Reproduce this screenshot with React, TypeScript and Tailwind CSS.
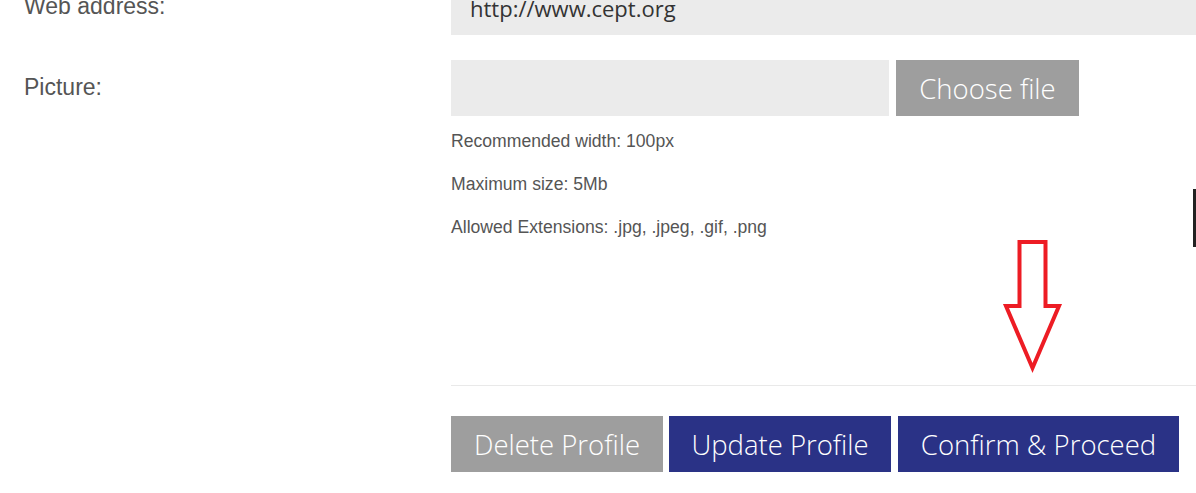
export default function App() {
  return (
    <div className="relative w-[1196px] h-[493px] overflow-hidden bg-white font-['Liberation_Sans',Arial,sans-serif] text-[#555]">
      {/* Web address row */}
      <div className="flex -mt-[21px] h-[56px]">
        <div className="w-[451px] pl-[24px] pt-[1px] text-[23px] leading-[52px]">Web address:</div>
        <div className="flex-1 bg-[#ebebeb] pl-[19px] pt-[1px] font-['Open_Sans',sans-serif] text-[22px] leading-[56px] text-[#333]">
          http://www.cept.org
        </div>
      </div>

      {/* Picture row */}
      <div className="flex mt-[25px]">
        <div className="w-[451px] pl-[24px] pt-[1px] text-[23px] leading-[52px]">Picture:</div>
        <div className="flex-1">
          <div className="flex gap-[7px]">
            <div className="w-[438px] h-[56px] bg-[#ebebeb]" />
            <button className="w-[183px] h-[56px] pt-[1px] bg-[#9e9e9e] text-white font-['Open_Sans',sans-serif] font-light text-[27.5px]">
              Choose file
            </button>
          </div>
          <div className="mt-[13px] flex flex-col gap-[18px] text-[17.6px] leading-[25px]">
            <p>Recommended width: 100px</p>
            <p>Maximum size: 5Mb</p>
            <p>Allowed Extensions: .jpg, .jpeg, .gif, .png</p>
          </div>
          <div className="mt-[145px] border-t border-[#e9e9e9]" />
          <div className="mt-[30px] flex font-['Open_Sans',sans-serif] font-light text-[27.5px] text-white">
            <button className="w-[212px] h-[56px] pt-[2px] bg-[#9e9e9e]">Delete Profile</button>
            <button className="ml-[6px] w-[222px] h-[56px] pt-[2px] bg-[#2a3286]">Update Profile</button>
            <button className="ml-[7px] w-[281px] h-[56px] pt-[2px] bg-[#2a3286]">Confirm &amp; Proceed</button>
          </div>
        </div>
      </div>

      {/* edge bar */}
      <div className="absolute left-[1193px] top-[189px] w-[3px] h-[58px] bg-[#222]" />

      {/* red arrow annotation */}
      <svg className="absolute left-0 top-0" width="1196" height="493" viewBox="0 0 1196 493">
        <polygon
          points="1019.5,242 1045.5,242 1045.5,306 1059,306 1032.5,368 1006,306 1019.5,306"
          fill="none"
          stroke="#ed1c24"
          strokeWidth="4"
          strokeLinejoin="miter"
        />
      </svg>
    </div>
  );
}
